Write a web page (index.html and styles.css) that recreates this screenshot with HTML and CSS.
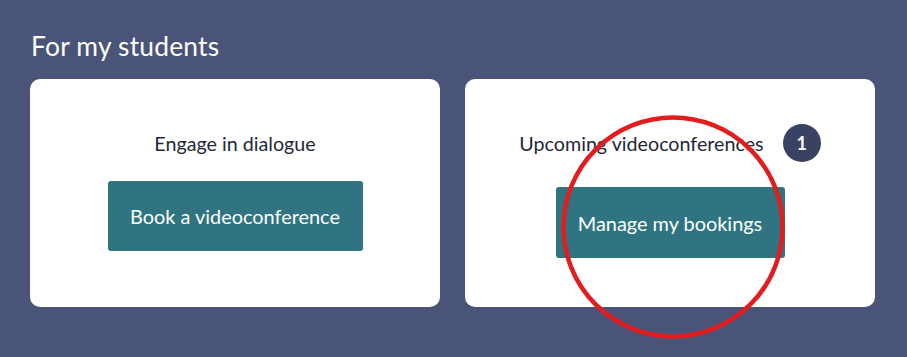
FILE: index.html
```html
<!DOCTYPE html>
<html lang="en">
<head>
  <meta charset="UTF-8">
  <title>For my students</title>
  <link rel="stylesheet" href="styles.css">
</head>
<body>
  <section class="students">
    <h2>For my students</h2>

    <div class="cards">
      <div class="card">
        <div class="card-head">
          <span>Engage in dialogue</span>
        </div>
        <a href="#" class="btn">Book a videoconference</a>
      </div>

      <div class="card">
        <div class="card-head">
          <span>Upcoming videoconferences</span>
          <span class="badge">1</span>
        </div>
        <a href="#" class="btn btn-manage">Manage my bookings</a>
      </div>
    </div>
  </section>

  <svg class="highlight" width="236" height="236" viewBox="0 0 236 236">
    <circle cx="118" cy="118" r="109.5" fill="none" stroke="#e11d1f" stroke-width="4.5"/>
  </svg>
</body>
</html>
```

FILE: styles.css
```css
:root {
  --bg: #4a5478;
  --teal: #2f7480;
  --dark: #1f2836;
  --badge: #3a4264;
}

body {
  margin: 0;
  background: var(--bg);
  font-family: 'Lato', sans-serif;
  height: 357px;
  overflow: hidden;
  position: relative;
}

.students {
  padding: 30px 32px 0 30px;
}

h2 {
  margin: 0 0 17px 1px;
  color: #fff;
  font-size: 26.4px;
  font-weight: 400;
  line-height: 32px;
  letter-spacing: 0.2px;
}

.cards {
  display: grid;
  grid-template-columns: 410px 410px;
  gap: 25px;
}

.card {
  background: #fff;
  border-radius: 10px;
  height: 228px;
  box-sizing: border-box;
  padding-bottom: 4px;
  display: flex;
  flex-direction: column;
  align-items: center;
  justify-content: center;
}

.card-head {
  display: flex;
  align-items: center;
  gap: 19px;
  min-height: 24px;
  color: var(--dark);
  font-size: 19.7px;
  margin-bottom: 25px;
}

.badge {
  width: 38px;
  height: 38px;
  border-radius: 50%;
  background: var(--badge);
  color: #fff;
  font-weight: 700;
  font-size: 18px;
  display: flex;
  align-items: center;
  justify-content: center;
}

.btn {
  display: flex;
  align-items: center;
  justify-content: center;
  width: 255px;
  height: 70px;
  border-radius: 3px;
  background: var(--teal);
  color: #fff;
  text-decoration: none;
  font-size: 19.9px;
}

.btn-manage {
  width: 229px;
  height: 71px;
}

.highlight {
  position: absolute;
  left: 555px;
  top: 109px;
}
```
